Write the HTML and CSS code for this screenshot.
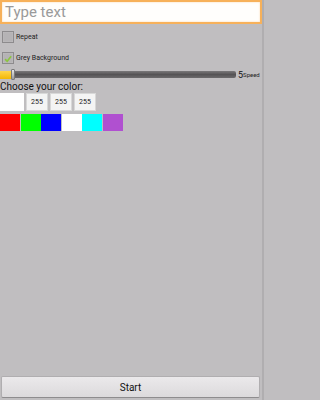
FILE: index.html
```html
<!DOCTYPE html>
<html>
<head>
<meta charset="utf-8">
<link rel="stylesheet" href="styles.css">
</head>
<body>
<div class="app">
  <div class="main">
    <div class="textbox"><span class="placeholder">Type text</span></div>
    <div class="check-row">
      <span class="cb"></span><span class="cb-label">Repeat</span>
    </div>
    <div class="check-row">
      <span class="cb checked"><svg viewBox="0 0 12 12" width="12" height="12"><path d="M2.5 6.2 L5 8.8 L9.8 2.8" fill="none" stroke="#8bc53f" stroke-width="2"/></svg></span><span class="cb-label">Grey Background</span>
    </div>
    <div class="seek-row">
      <div class="seek">
        <div class="seek-fill"></div>
        <div class="seek-thumb"></div>
        <div class="seek-track"></div>
      </div>
      <span class="seek-val">5</span><span class="seek-lbl">Speed</span>
    </div>
    <div class="choose">Choose your color:</div>
    <div class="rgb-row">
      <div class="preview"></div>
      <div class="num">255</div>
      <div class="num">255</div>
      <div class="num">255</div>
    </div>
    <div class="swatches">
      <div class="sw red"></div>
      <div class="sw green"></div>
      <div class="sw blue"></div>
      <div class="sw white"></div>
      <div class="sw cyan"></div>
      <div class="sw purple"></div>
    </div>
  </div>
  <div class="btn">Start</div>
</div>
</body>
</html>
```
FILE: styles.css
```css
html, body {
  margin: 0;
  padding: 0;
  background: #c0bec0;
  font-family: "Roboto", "Liberation Sans", sans-serif;
}
.app {
  width: 264px;
  height: 400px;
  display: flex;
  flex-direction: column;
  box-sizing: border-box;
  border-right: 2px solid #b0aeb0;
}
.main {
  flex: 1;
  display: flex;
  flex-direction: column;
}
.textbox {
  height: 24px;
  box-sizing: border-box;
  background: #fffefc;
  border: 2px solid #f7b15a;
  box-shadow: inset 0 0 2px #fbd5a5;
  display: flex;
  align-items: center;
  padding-left: 3px;
}
.placeholder {
  color: #9a9a9a;
  font-size: 15px;
}
.check-row {
  display: flex;
  align-items: center;
  height: 14px;
  margin-top: 6px;
  padding-left: 2px;
}
.check-row + .check-row {
  margin-top: 7px;
}
.cb {
  width: 12px;
  height: 12px;
  box-sizing: border-box;
  border: 1px solid #8d8b8d;
  background: #b5b3b5;
  box-shadow: inset 0 0 1px #e0dfe0;
  display: flex;
}
.cb-label {
  font-size: 7px;
  color: #222;
  margin-left: 2px;
}
.seek-row {
  display: flex;
  align-items: center;
  margin-top: 4px;
  height: 11px;
}
.seek {
  width: 236px;
  height: 10px;
  display: flex;
  align-items: center;
}
.seek-fill {
  width: 11px;
  height: 8px;
  background: linear-gradient(#ffd54a, #f2b705);
}
.seek-thumb {
  width: 4px;
  height: 11px;
  background: linear-gradient(#e8e8e8, #9a9a9a);
  border: 1px solid #7a7a7a;
  box-sizing: border-box;
  border-radius: 1px;
}
.seek-track {
  flex: 1;
  height: 7px;
  background: linear-gradient(#7a787a, #555355 50%, #6c6a6c);
  border-radius: 0 2px 2px 0;
}
.seek-val {
  font-size: 9px;
  color: #111;
  margin-left: 2px;
}
.seek-lbl {
  font-size: 6px;
  color: #222;
}
.choose {
  font-size: 10px;
  color: #111;
  margin-top: 1px;
  line-height: 12px;
}
.rgb-row {
  display: flex;
  gap: 2px;
  margin-top: 0;
  height: 18px;
}
.preview {
  width: 24px;
  background: #fff;
}
.num {
  width: 22px;
  background: #f4f4f4;
  font-size: 7px;
  color: #222;
  display: flex;
  align-items: center;
  justify-content: center;
  border: 1px solid #d8d8d8;
  box-sizing: border-box;
}
.swatches {
  display: flex;
  margin-top: 3px;
  height: 17px;
}
.sw { width: 20px; height: 17px; }
.sw + .sw { margin-left: 0.5px; }
.red { background: #ff0000; }
.green { background: #00ff00; }
.blue { background: #0000ff; }
.white { background: #ffffff; }
.cyan { background: #00ffff; }
.purple { background: #b050d0; }
.btn {
  height: 20px;
  margin: 0 2px 2px 1px;
  background: linear-gradient(#ebe9eb, #dcdadc);
  border: 1px solid #b0aeb0;
  border-bottom-color: #8e8c8e;
  border-radius: 2px;
  display: flex;
  align-items: center;
  justify-content: center;
  font-size: 10px;
  color: #111;
}
```
